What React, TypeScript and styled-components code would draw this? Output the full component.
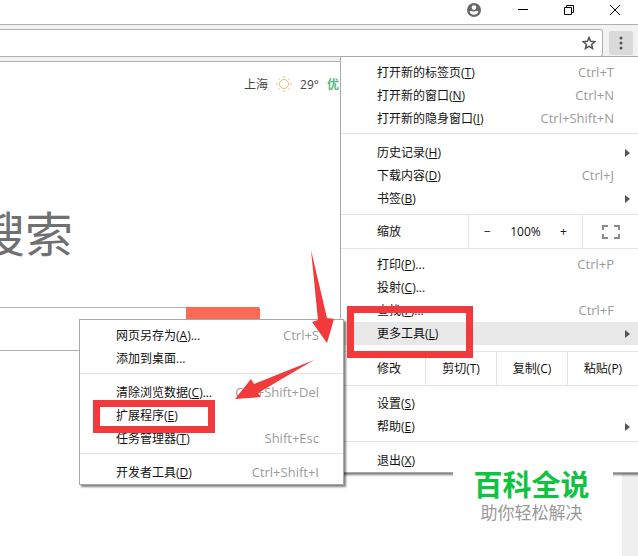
import React from "react";
import styled, { createGlobalStyle, css } from "styled-components";

const GlobalStyle = createGlobalStyle`
  *, *::before, *::after { box-sizing: border-box; }
  body {
    margin: 0;
    background: #fff;
    color: #111;
    font-family: "Open Sans", "Noto Sans CJK SC", sans-serif;
    font-size: 12px;
  }
  button, input {
    font: inherit;
    color: inherit;
    border: 0;
    padding: 0;
    background: none;
  }
`;

const LINE = "#b0b0b0";
const RULE = "#e4e4e4";
const RED = "#f2393b";

const Window = styled.div`
  position: relative;
  display: flex;
  flex-direction: column;
  min-height: 100vh;
  overflow: hidden;
`;

const TitleBar = styled.header`
  display: flex;
  justify-content: flex-end;
  height: 24px;
`;

const CaptionButton = styled.button<{ $wide?: boolean }>`
  display: flex;
  align-items: center;
  justify-content: center;
  width: ${(p) => (p.$wide ? 52 : 46)}px;
  height: 19px;
`;

const Toolbar = styled.div`
  position: relative;
  z-index: 2;
  display: flex;
  align-items: flex-start;
  gap: 6px;
  height: 38px;
  padding: 4px 5px 0 0;
  background: #f2f2f2;
  border-top: 1px solid ${LINE};
  border-bottom: 1px solid ${LINE};
`;

const Omnibox = styled.div`
  display: flex;
  flex: 1;
  align-items: center;
  height: 28px;
  padding-right: 6px;
  background: #fff;
  border: 1px solid ${LINE};
  border-left: 0;
  border-radius: 0 3px 3px 0;
`;

const AddressInput = styled.input`
  flex: 1;
  min-width: 0;
  outline: none;
`;

const IconButton = styled.button`
  display: flex;
`;

const MenuButton = styled.button`
  display: flex;
  align-items: center;
  justify-content: center;
  width: 24px;
  height: 24px;
  margin-top: 2px;
  background: #dadada;
  border-radius: 2px;
`;

const menuSurface = css`
  position: absolute;
  padding: 4px 0 0;
  background: #fff;
  border: 1px solid #a8a8a8;
  box-shadow: 2px 2px 2px rgba(0, 0, 0, 0.5);
`;

const Menu = styled.div`
  ${menuSurface}
  top: 31px;
  right: 0;
  width: 298px;
  border-right: 0;
`;

const SubMenu = styled.div`
  ${menuSurface}
  top: -3px;
  right: calc(100% - 3px);
  width: 265px;
`;

const ItemWrap = styled.div`
  position: relative;
`;

const Item = styled.button<{ $active?: boolean }>`
  display: flex;
  align-items: center;
  justify-content: space-between;
  width: 100%;
  height: 23px;
  padding: 0 24px 0 36px;
  line-height: 23px;
  text-align: left;
  white-space: nowrap;
  background: ${(p) => (p.$active ? "#e8e8e8" : "transparent")};
`;

const Shortcut = styled.span`
  color: #9b9b9b;
  font-size: 13px;
`;

const SubArrow = styled.svg`
  margin-right: -17px;
`;

const Rule = styled.hr<{ $above?: number; $below?: number }>`
  height: 1px;
  margin: ${(p) => p.$above ?? 0}px 0 ${(p) => p.$below ?? 0}px;
  border: 0;
  background: ${RULE};
`;

const ControlRow = styled.div`
  display: flex;
  height: 33px;
  line-height: 34px;
`;

const RowLabel = styled.span`
  flex: 1;
  padding-left: 36px;
`;

const ZoomGroup = styled.div`
  display: flex;
  width: 114px;
  border-left: 1px solid ${RULE};
`;

const ZoomButton = styled.button`
  width: 37px;
`;

const ZoomValue = styled.output`
  flex: 1;
  text-align: center;
`;

const FullscreenButton = styled.button`
  display: flex;
  align-items: center;
  justify-content: center;
  width: 56px;
  border-left: 1px solid ${RULE};
`;

const EditButton = styled.button`
  width: 71px;
  border-left: 1px solid ${RULE};
`;

const Highlight = styled.span<{ $kind: "tools" | "extensions" }>`
  position: absolute;
  z-index: 1;
  border: 7px solid ${RED};
  pointer-events: none;
  ${(p) =>
    p.$kind === "tools"
      ? "left: 6px; top: -16px; width: 126px; height: 52px;"
      : "left: 13px; top: -4px; width: 122px; height: 33px;"}
`;

const Arrows = styled.svg`
  position: absolute;
  z-index: 3;
  right: 302px;
  top: 248px;
  pointer-events: none;
`;

const Body = styled.div`
  display: flex;
  flex: 1;
`;

const Content = styled.main`
  flex: 1;
  min-width: 0;
  overflow: hidden;
`;

const ScrollTrack = styled.div`
  width: 16px;
  background: #f0f0f0;
`;

const Weather = styled.div`
  display: flex;
  align-items: center;
  justify-content: flex-end;
  gap: 8px;
  height: 44px;
  padding-right: 283px;
  color: #444;
`;

const AirQuality = styled.strong`
  color: #55b980;
`;

const Headline = styled.h1`
  margin: 92px 0 38px -23px;
  color: #707070;
  font-size: 48px;
  font-weight: 400;
  line-height: 71px;
`;

const SearchForm = styled.form`
  display: flex;
  width: 260px;
  height: 44px;
`;

const SearchInput = styled.input`
  flex: 1;
  min-width: 0;
  border: solid ${LINE};
  border-width: 1px 0;
  outline: none;
`;

const SearchButton = styled.button`
  width: 74px;
  background: #fc6a55;
  border-radius: 0 2px 2px 0;
`;

const Brand = styled.aside`
  position: absolute;
  z-index: 4;
  right: 25px;
  bottom: 24px;
  width: 160px;
  height: 80px;
  padding: 15px 3px 0 0;
  text-align: center;
  background: #fff;
`;

const BrandName = styled.div`
  color: #0fc340;
  font-size: 29px;
  font-weight: 700;
  line-height: 36px;
`;

const BrandLine = styled.div`
  color: #999;
  font-size: 17px;
  line-height: 20px;
`;

type Entry = {
  label: string;
  mnemonic?: string;
  more?: boolean;
  keys?: string;
  submenu?: boolean;
  active?: boolean;
};

function MenuItem({ label, mnemonic, more, keys, submenu, active }: Entry) {
  return (
    <Item type="button" role="menuitem" $active={active} aria-haspopup={submenu ? "menu" : undefined}>
      <span>
        {label}
        {mnemonic && (
          <>
            (<u>{mnemonic}</u>)
          </>
        )}
        {more && "..."}
      </span>
      {keys && <Shortcut>{keys}</Shortcut>}
      {submenu && (
        <SubArrow width="6" height="8" viewBox="0 0 6 8" aria-hidden="true">
          <path d="M0 0 5 4 0 8Z" fill="#555" />
        </SubArrow>
      )}
    </Item>
  );
}

function ToolsMenu() {
  return (
    <SubMenu role="menu" aria-label="更多工具">
      <MenuItem label="网页另存为" mnemonic="A" more keys="Ctrl+S" />
      <MenuItem label="添加到桌面" more />
      <Rule $above={3} $below={7} />
      <MenuItem label="清除浏览数据" mnemonic="C" more keys="Ctrl+Shift+Del" />
      <ItemWrap>
        <MenuItem label="扩展程序" mnemonic="E" />
        <Highlight $kind="extensions" />
      </ItemWrap>
      <MenuItem label="任务管理器" mnemonic="T" keys="Shift+Esc" />
      <Rule $above={3} $below={7} />
      <MenuItem label="开发者工具" mnemonic="D" keys="Ctrl+Shift+I" />
    </SubMenu>
  );
}

function MainMenu() {
  return (
    <Menu role="menu" aria-label="菜单">
      <MenuItem label="打开新的标签页" mnemonic="T" keys="Ctrl+T" />
      <MenuItem label="打开新的窗口" mnemonic="N" keys="Ctrl+N" />
      <MenuItem label="打开新的隐身窗口" mnemonic="I" keys="Ctrl+Shift+N" />
      <Rule $above={3} $below={7} />
      <MenuItem label="历史记录" mnemonic="H" submenu />
      <MenuItem label="下载内容" mnemonic="D" keys="Ctrl+J" />
      <MenuItem label="书签" mnemonic="B" submenu />
      <Rule $above={4} />
      <ControlRow>
        <RowLabel>缩放</RowLabel>
        <ZoomGroup>
          <ZoomButton type="button" aria-label="缩小">−</ZoomButton>
          <ZoomValue>100%</ZoomValue>
          <ZoomButton type="button" aria-label="放大">+</ZoomButton>
        </ZoomGroup>
        <FullscreenButton type="button" aria-label="全屏">
          <svg width="18" height="14" viewBox="0 0 18 14" fill="none" stroke="#8a8a8a" strokeWidth="2" aria-hidden="true">
            <path d="M1 5V1H6M12 1H17V5M17 9V13H12M6 13H1V9" />
          </svg>
        </FullscreenButton>
      </ControlRow>
      <Rule $below={4} />
      <MenuItem label="打印" mnemonic="P" more keys="Ctrl+P" />
      <MenuItem label="投射" mnemonic="C" more />
      <MenuItem label="查找" mnemonic="F" more keys="Ctrl+F" />
      <ItemWrap>
        <MenuItem label="更多工具" mnemonic="L" submenu active />
        <Highlight $kind="tools" />
        <ToolsMenu />
      </ItemWrap>
      <Rule $above={6} />
      <ControlRow>
        <RowLabel>修改</RowLabel>
        <EditButton type="button">剪切(T)</EditButton>
        <EditButton type="button">复制(C)</EditButton>
        <EditButton type="button">粘贴(P)</EditButton>
      </ControlRow>
      <Rule $below={6} />
      <MenuItem label="设置" mnemonic="S" />
      <MenuItem label="帮助" mnemonic="E" submenu />
      <Rule $above={3} $below={7} />
      <MenuItem label="退出" mnemonic="X" />
    </Menu>
  );
}

export default function App() {
  return (
    <>
      <GlobalStyle />
      <Window>
        <TitleBar>
          <CaptionButton $wide type="button" aria-label="用户">
            <svg width="14" height="14" viewBox="0 0 14 14" aria-hidden="true">
              <circle cx="7" cy="7" r="7" fill="#686868" />
              <circle cx="7" cy="4.6" r="2.3" fill="#fff" />
              <path d="M2.600 8.200C4 7.700 5.400 8.500 7 8.500s3-.8 4.400-.3C11 10.500 9.200 11.800 7 11.800S3 10.500 2.600 8.200Z" fill="#fff" />
            </svg>
          </CaptionButton>
          <CaptionButton type="button" aria-label="最小化">
            <svg width="10" height="11" viewBox="0 0 10 11" stroke="#000" aria-hidden="true">
              <path d="M0 5.500H10" />
            </svg>
          </CaptionButton>
          <CaptionButton type="button" aria-label="还原">
            <svg width="10" height="10" viewBox="0 0 10 10" fill="none" stroke="#000" aria-hidden="true">
              <path d="M.5 2.500H7.500V9.500H.5ZM2.500 2.500V.5H9.500V7.500H7.500" />
            </svg>
          </CaptionButton>
          <CaptionButton type="button" aria-label="关闭">
            <svg width="10" height="10" viewBox="0 0 10 10" stroke="#000" aria-hidden="true">
              <path d="M0 0 10 10M10 0 0 10" />
            </svg>
          </CaptionButton>
        </TitleBar>

        <Toolbar>
          <Omnibox>
            <AddressInput type="text" aria-label="地址栏" />
            <IconButton type="button" aria-label="收藏">
              <svg width="14" height="14" viewBox="0 0 14 14" fill="none" stroke="#555" strokeWidth="1.5" aria-hidden="true">
                <path d="M7 1.500 8.600 5.300 12.800 5.700 9.600 8.400 10.600 12.500 7 10.300 3.400 12.500 4.400 8.400 1.200 5.700 5.400 5.300Z" />
              </svg>
            </IconButton>
          </Omnibox>
          <MenuButton type="button" aria-label="自定义及控制" aria-expanded="true">
            <svg width="4" height="14" viewBox="0 0 4 14" fill="#555" aria-hidden="true">
              <circle cx="2" cy="2" r="1.500" />
              <circle cx="2" cy="7" r="1.500" />
              <circle cx="2" cy="12" r="1.500" />
            </svg>
          </MenuButton>
          <MainMenu />
        </Toolbar>

        <Body>
          <Content>
            <Weather>
              <span>上海</span>
              <svg width="16" height="16" viewBox="0 0 16 16" fill="none" stroke="#f3b56a" aria-hidden="true">
                <circle cx="8" cy="8" r="4.500" />
                <path d="M8 0V2M8 14V16M0 8H2M14 8H16M2.300 2.300 3.700 3.700M12.300 12.300 13.700 13.700M2.300 13.700 3.700 12.300M12.300 3.700 13.700 2.300" />
              </svg>
              <span>29°</span>
              <AirQuality>优</AirQuality>
            </Weather>
            <Headline>搜索</Headline>
            <SearchForm>
              <SearchInput type="text" aria-label="搜索" />
              <SearchButton type="button" aria-label="提交搜索" />
            </SearchForm>
          </Content>
          <ScrollTrack />
        </Body>

        <Arrows width="106" height="154" viewBox="0 0 106 154" fill={RED} aria-hidden="true">
          <path d="M81 2 97 70 104 71 97 95 82 74 88 72Z" />
          <path d="M84 112 28 145 31 149 5 151 21 131 24 136Z" />
        </Arrows>

        <Brand>
          <BrandName>百科全说</BrandName>
          <BrandLine>助你轻松解决</BrandLine>
        </Brand>
      </Window>
    </>
  );
}
